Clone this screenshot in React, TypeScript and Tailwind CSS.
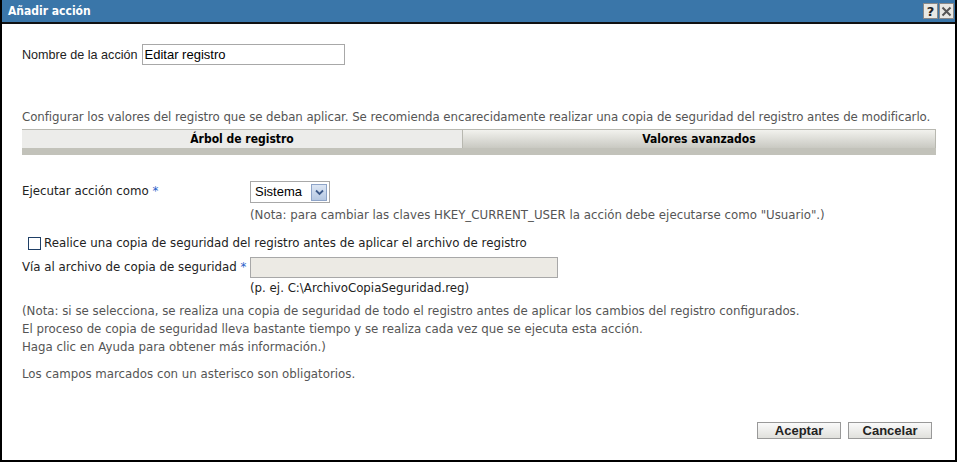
import React from 'react';

const body = { fontFamily: '"DejaVu Sans", sans-serif' };
const cond = { fontFamily: '"DejaVu Sans Condensed", "DejaVu Sans", sans-serif' };
const arial = { fontFamily: '"Liberation Sans", Arial, sans-serif' };

function Req() {
  return <span className="text-[#2a62c9]">*</span>;
}

export default function App() {
  return (
    <div className="w-[957px] h-[462px] bg-white border-x-2 border-b-2 border-black flex flex-col text-[11.8px] leading-[14px] text-[#333]" style={body}>
      {/* Title bar */}
      <div className="h-[24px] bg-[#3a76a9] border-b-2 border-[#111] flex items-center justify-between pl-[6px] pr-[1px] shrink-0">
        <span className="text-white font-bold text-[12px]" style={cond}>Añadir acción</span>
        <div className="flex gap-[1px]">
          <span className="w-[15px] h-[16px] bg-[#e8e8e4] border border-[#888] flex items-center justify-center text-[13px] font-bold text-[#222] leading-none">?</span>
          <span className="w-[15px] h-[16px] bg-[#e8e8e4] border border-[#888] flex items-center justify-center">
            <svg width="11" height="11" viewBox="0 0 11 11"><path d="M1.5 1.5 L9.5 9.5 M9.5 1.5 L1.5 9.5" stroke="#555" strokeWidth="2" /></svg>
          </span>
        </div>
      </div>

      <div className="flex-1 flex flex-col pl-[20px] pr-[20px]">
        {/* Nombre */}
        <div className="flex items-center mt-[20px] gap-[4px]">
          <span className="text-[#222] text-[12.6px]" style={arial}>Nombre de la acción</span>
          <input
            defaultValue="Editar registro"
            className="w-[203px] h-[21px] border border-[#a8a8a8] px-[2px] text-[13px] text-black outline-none"
            style={arial}
          />
        </div>

        <p className="mt-[45px] text-[#555] whitespace-nowrap tracking-[-0.06px]">
          Configurar los valores del registro que se deban aplicar. Se recomienda encarecidamente realizar una copia de seguridad del registro antes de modificarlo.
        </p>

        {/* Tabs */}
        <div className="mt-[5px] w-[914px] flex flex-col" style={cond}>
          <div className="flex h-[19px] text-[12px]">
            <div className="w-[440px] bg-[#ececea] border-t border-[#b8b8b0] flex items-center justify-center font-bold text-black">Árbol de registro</div>
            <div className="flex-1 bg-gradient-to-b from-[#f2f2ee] to-[#c9c9c2] border border-b-0 border-[#b8b8b0] flex items-center justify-center font-bold text-black">Valores avanzados</div>
          </div>
          <div className="h-[7px] bg-[#c2c2ba]" />
        </div>

        {/* Ejecutar */}
        <div className="flex mt-[26px]">
          <div className="w-[228px] pt-[3px] text-[#222]">Ejecutar acción como <Req /></div>
          <div className="flex flex-col">
            <div className="w-[80px] h-[22px] border border-[#a8a8a8] flex items-center justify-between pl-[4px] pr-[2px] text-[13px] text-black" style={arial}>
              <span>Sistema</span>
              <span className="w-[16px] h-[17px] bg-gradient-to-b from-[#dce6f4] to-[#b6c8e2] border border-[#8ea4c8] flex items-center justify-center">
                <svg width="9" height="7" viewBox="0 0 9 7"><path d="M1 1.5 L4.5 5 L8 1.5" stroke="#3d5a8a" strokeWidth="1.8" fill="none" /></svg>
              </span>
            </div>
            <div className="mt-[5px] text-[#555]">(Nota: para cambiar las claves HKEY_CURRENT_USER la acción debe ejecutarse como "Usuario".)</div>
          </div>
        </div>

        {/* Checkbox */}
        <div className="flex items-center mt-[14px] ml-[6px] gap-[3px] text-[#222]">
          <span className="w-[13px] h-[13px] border border-[#1f3f66] bg-white" />
          <span>Realice una copia de seguridad del registro antes de aplicar el archivo de registro</span>
        </div>

        {/* Via */}
        <div className="flex mt-[7px]">
          <div className="w-[228px] pt-[3px] text-[#222] whitespace-nowrap">Vía al archivo de copia de seguridad <Req /></div>
          <div className="flex flex-col">
            <div className="w-[308px] h-[21px] bg-[#eceae4] border border-[#a8a8a8]" />
            <div className="mt-[3px] text-[#222]">(p. ej. C:\ArchivoCopiaSeguridad.reg)</div>
          </div>
        </div>

        <div className="mt-[7px] text-[#555] leading-[18px]">
          <div>(Nota: si se selecciona, se realiza una copia de seguridad de todo el registro antes de aplicar los cambios del registro configurados.</div>
          <div>El proceso de copia de seguridad lleva bastante tiempo y se realiza cada vez que se ejecuta esta acción.</div>
          <div>Haga clic en Ayuda para obtener más información.)</div>
        </div>

        <div className="mt-[11px] text-[#555]">Los campos marcados con un asterisco son obligatorios.</div>

        <div className="flex justify-end gap-[7px] mt-[41px] pr-[3px]">
          <button className="w-[84px] h-[17px] bg-gradient-to-b from-[#fafafa] to-[#e0e0dc] border border-[#999] font-bold text-[13px] text-[#222] leading-none" style={arial}>Aceptar</button>
          <button className="w-[84px] h-[17px] bg-gradient-to-b from-[#fafafa] to-[#e0e0dc] border border-[#999] font-bold text-[13px] text-[#222] leading-none" style={arial}>Cancelar</button>
        </div>
      </div>
    </div>
  );
}
